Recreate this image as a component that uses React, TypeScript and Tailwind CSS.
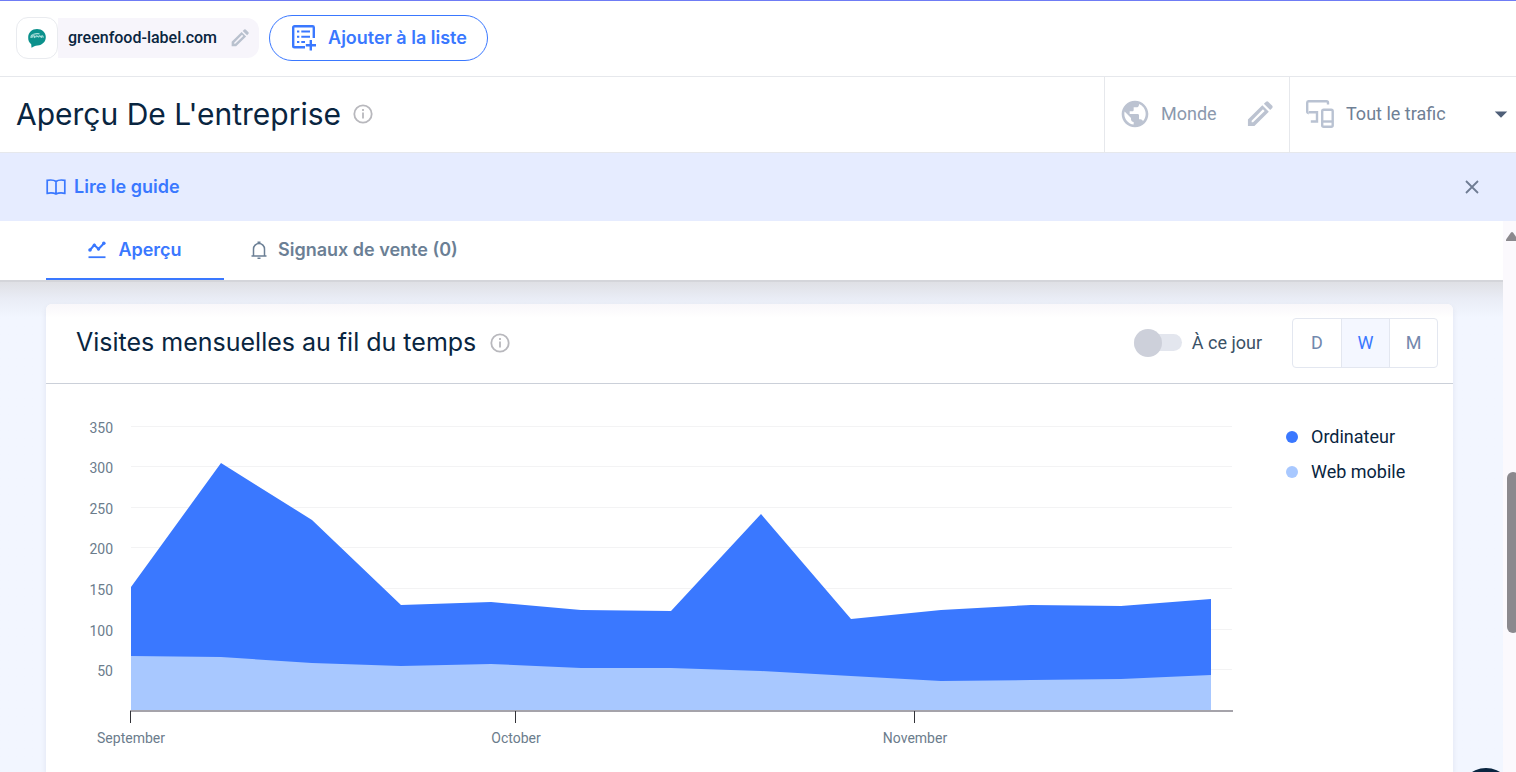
import { useState } from 'react'
import { MdPublic, MdArrowDropDown } from 'react-icons/md'

const desktopPoints = [
  [0, 587], [90, 463], [181, 520], [270, 605], [360, 602], [450, 610], [540, 611],
  [630, 514], [720, 619], [810, 610], [900, 605], [990, 606], [1080, 599],
]

const mobilePoints = [
  [0, 656], [90, 657], [181, 663], [270, 666], [360, 664], [450, 668], [540, 668],
  [630, 671], [720, 676], [810, 681], [900, 680], [990, 679], [1080, 675],
]

const yTicks = [
  { label: '350', y: 427 },
  { label: '300', y: 467 },
  { label: '250', y: 508 },
  { label: '200', y: 548 },
  { label: '150', y: 589 },
  { label: '100', y: 630 },
  { label: '50', y: 670 },
]

const xTicks = [
  { label: 'September', x: 130 },
  { label: 'October', x: 515 },
  { label: 'November', x: 914 },
]

const legend = [
  { label: 'Ordinateur', dot: 'bg-[#3a78ff]' },
  { label: 'Web mobile', dot: 'bg-[#a8c8ff]' },
]

const periods = ['D', 'W', 'M']

function toArea(points: number[][]) {
  const line = points.map(([x, y]) => `${x + 131},${y}`).join(' ')
  return `131,711 ${line} 1211,711`
}

function InfoIcon() {
  return (
    <svg className="w-5 h-5 shrink-0" viewBox="0 0 20 20" fill="none" stroke="#b8b8bd" strokeWidth="1.8">
      <circle cx="10" cy="10" r="8.7" />
      <path d="M10 8.5v6" />
      <path d="M10 5v2" />
    </svg>
  )
}

function PencilIcon({ className }: { className: string }) {
  return (
    <svg className={className} viewBox="0 0 28 28">
      <path
        fillRule="evenodd"
        fill="currentColor"
        d="M1 27V20L16.500 4.500l7 7L8 27ZM5 22.800H6.500L19 10.800 17.200 9 5 21.200Z"
      />
      <path fill="currentColor" d="M18.200 3 20.500.8Q21.700 0 22.800.8L27.200 5.200Q28 6.300 27.200 7.500L25 9.800Z" />
    </svg>
  )
}

function SiteLogo() {
  return (
    <svg className="w-5 h-5" viewBox="0 0 20 20">
      <path d="M10 1C15 1 18.8 4.4 18.8 9S15.500 17.200 10.500 17.400C8 17.700 6.500 18.600 4.500 19.800L4.200 16.200C2 14.700 1 12 1.200 9 1.500 4.300 5 1 10 1Z" fill="#0b918c" />
      <path d="M3.800 9.800C4 6.800 6.300 6 6.300 7.500S4.500 9 5 9.800M7.200 10l.6-2.500M9 9.500c-.5-2 2-2.300 1.500-.5M11.800 9.500c-.5-2 2-2.300 1.500-.5M14.300 10V8.300c1-.8 2-.5 1.800 1.500M6.500 6.300c2-.8 4-.9 6-.5" stroke="#a9deda" strokeWidth="1.2" fill="none" />
    </svg>
  )
}

function AddListIcon() {
  return (
    <svg className="w-6 h-[26px] shrink-0" viewBox="0 0 24 26" fill="none" stroke="currentColor" strokeWidth="2.4">
      <path d="M13 22.300H2.500A1.300 1.300 0 0 1 1.200 21V2.500A1.300 1.300 0 0 1 2.500 1.200h18A1.300 1.300 0 0 1 21.800 2.500V13" />
      <path d="M5 6.500h2.300M9.300 6.500h8.700M5 11.700h2.300M9.300 11.700h8.700M5 17h2.300M9.300 17h3.700" strokeWidth="2" />
      <path d="M18.800 15v10.500M13.800 20.300h10.200" />
    </svg>
  )
}

function DevicesIcon() {
  return (
    <svg className="w-7 h-7 shrink-0" viewBox="0 0 28 28" fill="none" stroke="#b9c2d2" strokeWidth="2.400">
      <path d="M22 4.500V2.700A1.500 1.500 0 0 0 20.500 1.200h-18A1.500 1.500 0 0 0 1.200 2.700v9A1.500 1.500 0 0 0 2.700 13.200" />
      <path d="M2.200 15.600h0M2.700 12.200H11V21.500H4.800" />
      <rect x="16.200" y="9.800" width="10.500" height="17" rx="1.500" />
      <path d="M16 21.500h10.800" />
    </svg>
  )
}

function BookIcon() {
  return (
    <svg className="w-5 h-5" viewBox="0 0 20 20" fill="none" stroke="currentColor" strokeWidth="1.7">
      <path d="M10 4.500C8 2.800 4.500 2.800 1.200 3.300v13c3-.5 6.500-.5 8.800.8 2.300-1.300 5.800-1.300 8.800-.8v-13C15.500 2.800 12 2.800 10 4.500ZM10 4.500v12.600" />
    </svg>
  )
}

function TrendIcon() {
  return (
    <svg className="w-[18px] h-[18px]" viewBox="0 0 18 18" fill="none" stroke="currentColor">
      <path d="M2 9 6.300 4l4.200 4L16 2.200" strokeWidth="2" />
      <path d="M.5 16.200h17" strokeWidth="1.8" />
      <g fill="currentColor" stroke="none">
        <circle cx="2" cy="9" r="1.8" />
        <circle cx="6.300" cy="4.200" r="1.7" />
        <circle cx="10.500" cy="8" r="1.7" />
        <circle cx="15.800" cy="2.300" r="1.8" />
      </g>
    </svg>
  )
}

function BellIcon() {
  return (
    <svg className="w-[18px] h-[18px]" viewBox="0 0 18 18" fill="none" stroke="currentColor" strokeWidth="1.5">
      <path d="M1.500 15h15M3.500 15V8a5.500 5.500 0 0 1 11 0v7M7.500 1.200h3M7.500 17.200h3" />
    </svg>
  )
}

function VisitsChart() {
  return (
    <svg
      className="w-full h-auto"
      viewBox="46 384 1240 388"
      fontFamily="Roboto, sans-serif"
      fontSize="14"
      fill="#6b7c8c"
    >
      {yTicks.map((tick) => (
        <g key={tick.label}>
          <line x1="131" x2="1232" y1={tick.y - 0.5} y2={tick.y - 0.5} stroke="#f3f3f4" />
          <text x="113" y={tick.y + 6} textAnchor="end">{tick.label}</text>
        </g>
      ))}
      <polygon points={toArea(desktopPoints)} fill="#3a78ff" />
      <polygon points={toArea(mobilePoints)} fill="#a8c8ff" />
      <line x1="130" x2="1233" y1="711" y2="711" stroke="#a5a3aa" strokeWidth="2" />
      {xTicks.map((tick) => (
        <g key={tick.label}>
          <line x1={tick.x + 0.5} x2={tick.x + 0.5} y1="711" y2="723" stroke="#333338" />
          <text x={tick.x + 1} y="743" textAnchor="middle">{tick.label}</text>
        </g>
      ))}
    </svg>
  )
}

export default function App() {
  const [period, setPeriod] = useState('W')
  const [toDate, setToDate] = useState(false)
  const [guideOpen, setGuideOpen] = useState(true)

  return (
    <div className="h-screen flex flex-col overflow-hidden bg-white font-[Roboto,sans-serif] text-[#092540]">
      {/* Site bar */}
      <header className="flex items-center gap-[10px] h-[77px] shrink-0 px-4 pb-0.5 border-t border-t-[#6f7cf5] border-b border-b-[#e6e8ec]">
        <div className="flex items-center h-[42px]">
          <div className="flex items-center justify-center w-[42px] h-[42px] rounded-xl border border-[#e9ebef] bg-white">
            <SiteLogo />
          </div>
          <div className="flex items-center h-10 px-[10px] rounded-r-xl bg-[#f7f5fb]">
            <span className="text-base font-medium">greenfood-label.com</span>
            <button aria-label="Modifier le site" className="ml-[14px] text-[#b9c1ce]">
              <PencilIcon className="w-[18px] h-[18px]" />
            </button>
          </div>
        </div>
        <button className="flex items-center gap-3 h-[46px] px-5 pl-[22px] rounded-full border border-[#3a78ff] text-[#3a78ff] font-[Inter,sans-serif] text-lg font-semibold">
          <AddListIcon />
          Ajouter à la liste
        </button>
      </header>

      {/* Page title and filters */}
      <div className="flex items-stretch h-[76px] shrink-0 border-b border-[#e6e8ec]">
        <div className="flex flex-1 items-center gap-3 px-4 pb-0.5">
          <h1 className="font-[Inter,sans-serif] text-3xl">Aperçu De L'entreprise</h1>
          <InfoIcon />
        </div>
        <button className="flex items-center w-[185px] px-4 pb-0.5 border-l border-[#e6e8ec] text-lg text-[#8b99ad]">
          <MdPublic className="w-8 h-8 -mx-0.5 mr-[10px] text-[#bcc3d1]" />
          Monde
          <PencilIcon className="w-[26px] h-[26px] ml-auto text-[#bcc3d1]" />
        </button>
        <button className="flex items-center w-[227px] pl-4 pb-0.5 border-l border-[#e6e8ec] text-lg text-[#6f8095]">
          <DevicesIcon />
          <span className="ml-3">Tout le trafic</span>
          <MdArrowDropDown className="w-[30px] h-[30px] ml-auto text-[#4f5f78]" />
        </button>
      </div>

      {guideOpen && (
        <div className="flex items-center justify-between h-[68px] shrink-0 pl-[46px] pr-9 bg-[#e6ecff]">
          <a href="#guide" className="flex items-center gap-2 font-[Inter,sans-serif] text-lg font-semibold text-[#3a78ff]">
            <BookIcon />
            Lire le guide
          </a>
          <button aria-label="Fermer" onClick={() => setGuideOpen(false)} className="text-[#6f7c93]">
            <svg className="w-4 h-4" viewBox="0 0 16 16" stroke="currentColor" strokeWidth="1.8">
              <path d="M2 2l12 12M14 2 2 14" />
            </svg>
          </button>
        </div>
      )}

      <div className="flex flex-1 min-h-0">
        <div className="flex-1 min-w-0 bg-[#f2f6ff]">
          <nav className="flex h-[61px] px-[46px] bg-white border-b-2 border-[#d4d5da] font-[Inter,sans-serif] text-lg font-semibold">
            <button className="flex items-center justify-center gap-3 w-[178px] border-b-2 border-[#3a78ff] text-[#3a78ff]">
              <TrendIcon />
              Aperçu
            </button>
            <button className="flex items-center gap-[10px] px-[26px] border-b-2 border-transparent text-[#6b7f95]">
              <BellIcon />
              Signaux de vente (0)
            </button>
          </nav>

          <div className="pl-[46px] pr-[50px] pt-[22px] bg-linear-to-b from-[#dfe0e5] via-[#e9ecf5] via-[16px] to-[#f2f6ff] to-[36px]">
            <section className="rounded-t-md bg-white shadow-[0_3px_6px_rgba(14,30,62,0.08)]">
              <div className="flex items-center h-20 pl-[30px] pr-[15px] pb-0.5 rounded-t-md border-b border-[#cbd0d9] bg-linear-to-b from-[#f9f7fa] to-white to-[14px]">
                <h2 className="font-[Inter,sans-serif] text-[25px]">Visites mensuelles au fil du temps</h2>
                <span className="ml-[14px]"><InfoIcon /></span>
                <label className="relative flex items-center ml-auto mr-[30px] text-lg text-[#3a5166]">
                  <input
                    type="checkbox"
                    checked={toDate}
                    onChange={(e) => setToDate(e.target.checked)}
                    className="peer absolute opacity-0"
                  />
                  <span className="flex items-center w-12 h-[17px] mr-[10px] rounded-full bg-[#e3e6ee] peer-checked:justify-end">
                    <span className="w-7 h-7 rounded-full bg-[#cdd0da]" />
                  </span>
                  À ce jour
                </label>
                <div className="flex h-[50px] rounded border border-[#e3e7f0] overflow-hidden text-lg">
                  {periods.map((item) => (
                    <button
                      key={item}
                      onClick={() => setPeriod(item)}
                      className={`w-12 border-l border-[#e3e7f0] first:border-l-0 ${period === item ? 'bg-[#f4f7ff] text-[#3a78ff]' : 'text-[#7388ad]'}`}
                    >
                      {item}
                    </button>
                  ))}
                </div>
              </div>

              <div className="flex">
                <div className="flex-1 min-w-0">
                  <VisitsChart />
                </div>
                <ul className="w-[167px] pt-[35px] text-lg">
                  {legend.map((item) => (
                    <li key={item.label} className="flex items-center gap-[13px] h-[35px]">
                      <span className={`w-3 h-3 rounded-full ${item.dot}`} />
                      {item.label}
                    </li>
                  ))}
                </ul>
              </div>
            </section>
          </div>
        </div>

        {/* Scroll rail */}
        <div className="relative w-[13px] bg-[#fbf9fd] overflow-hidden">
          <svg className="absolute top-[10px] left-[3px] w-3 h-[10px]" viewBox="0 0 12 10">
            <path d="M0 10V8.500L5 1.500Q6 .5 7 1.500L12 8.500V10Z" fill="#8b898e" />
          </svg>
          <div className="absolute top-[251px] left-1 w-3 h-[161px] rounded-md bg-[#8b898e]" />
        </div>
      </div>

      <button aria-label="Aide" className="fixed right-[2px] -bottom-[52px] w-14 h-14 rounded-full bg-[#092540]" />
    </div>
  )
}
